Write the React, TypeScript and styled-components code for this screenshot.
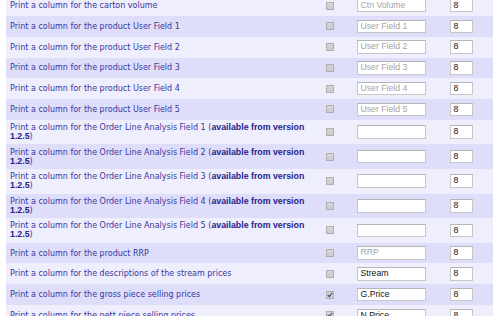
import React from "react";
import styled, { createGlobalStyle } from "styled-components";

const Global = createGlobalStyle`
  html, body { margin: 0; padding: 0; background: #ffffff; overflow: hidden; }
  body { width: 500px; height: 316px; }
`;

const Page = styled.div`
  margin-top: -4.75px;
  padding-left: 6px;
  width: 487px;
  font-family: "DejaVu Sans", Verdana, sans-serif;
`;

const Row = styled.div<{ $alt: boolean }>`
  display: grid;
  grid-template-columns: 312px 24px 99px 52px;
  align-items: center;
  min-height: 20.75px;
  background: ${(p) => (p.$alt ? "#dedefb" : "#eeeefd")};
`;

const Label = styled.div`
  padding: 3.3px 4px;
  font-size: 8px;
  line-height: 9px;
  color: #38389f;
`;

const Strong = styled.b`
  font-family: "Liberation Sans", Arial, sans-serif;
  font-size: 8.8px;
  font-weight: bold;
  color: #24248c;
`;

const CheckCell = styled.div`
  display: flex;
  justify-content: center;
`;

const Box = styled.span`
  display: flex;
  align-items: center;
  justify-content: center;
  width: 8px;
  height: 8px;
  box-sizing: border-box;
  border: 1px solid #afafaf;
  background: linear-gradient(#d6d6d6, #cbcbcb);
`;

const TextCell = styled.div`
  padding-left: 15px;
`;

const WidthCell = styled.div`
  padding-left: 9px;
`;

const Field = styled.div<{ $w: number; $muted?: boolean }>`
  width: ${(p) => p.$w}px;
  height: 13.5px;
  box-sizing: border-box;
  border: 1px solid #c6c6c6;
  border-top-color: #b6b6b6;
  background: #ffffff;
  padding: 0 2.5px;
  font-family: "Liberation Sans", Arial, sans-serif;
  font-size: 8.7px;
  line-height: 11.5px;
  color: ${(p) => (p.$muted ? "#a4a4a4" : "#141414")};
  white-space: nowrap;
  overflow: hidden;
`;

type R = { label: React.ReactNode; field: string; muted?: boolean; checked?: boolean };

const avail = (n: number) => (
  <>
    Print a column for the Order Line Analysis Field {n} (
    <Strong>available from version 1.2.5</Strong>)
  </>
);

const rows: R[] = [
  { label: "Print a column for the carton volume", field: "Ctn Volume", muted: true },
  { label: "Print a column for the product User Field 1", field: "User Field 1", muted: true },
  { label: "Print a column for the product User Field 2", field: "User Field 2", muted: true },
  { label: "Print a column for the product User Field 3", field: "User Field 3", muted: true },
  { label: "Print a column for the product User Field 4", field: "User Field 4", muted: true },
  { label: "Print a column for the product User Field 5", field: "User Field 5", muted: true },
  { label: avail(1), field: "" },
  { label: avail(2), field: "" },
  { label: avail(3), field: "" },
  { label: avail(4), field: "" },
  { label: avail(5), field: "" },
  { label: "Print a column for the product RRP", field: "RRP", muted: true },
  { label: "Print a column for the descriptions of the stream prices", field: "Stream" },
  { label: "Print a column for the gross piece selling prices", field: "G.Price", checked: true },
  { label: "Print a column for the nett piece selling prices", field: "N.Price", checked: true },
];

const Check = () => (
  <svg width="6" height="6" viewBox="0 0 6 6">
    <polyline points="0.8,3 2.3,4.6 5.2,0.9" fill="none" stroke="#4a4a7a" strokeWidth="1.1" />
  </svg>
);

export default function App() {
  return (
    <>
      <Global />
      <Page>
        {rows.map((r, i) => (
          <Row key={i} $alt={i % 2 === 1}>
            <Label>{r.label}</Label>
            <CheckCell>
              <Box>{r.checked ? <Check /> : null}</Box>
            </CheckCell>
            <TextCell>
              <Field $w={69} $muted={r.muted}>{r.field}</Field>
            </TextCell>
            <WidthCell>
              <Field $w={23}>8</Field>
            </WidthCell>
          </Row>
        ))}
      </Page>
    </>
  );
}
